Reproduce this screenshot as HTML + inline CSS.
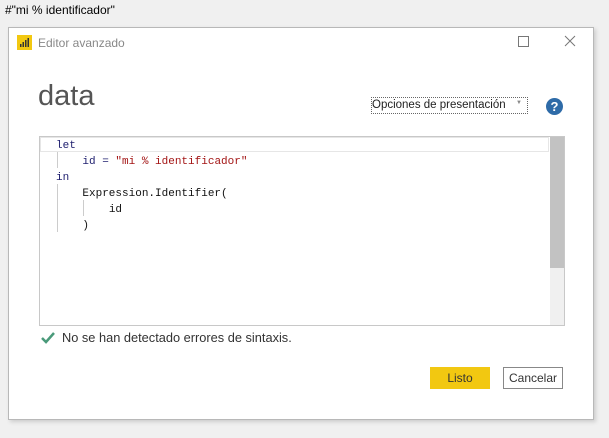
<!DOCTYPE html>
<html><head><meta charset="utf-8"><style>
body{margin:0;width:609px;height:438px;background:#f0f0f0;font-family:"Liberation Sans",sans-serif;position:relative;overflow:hidden}
.a{position:absolute}
.mono{font-family:"Liberation Mono",monospace;font-size:11px;color:#1e1e6e}
</style></head><body>
<div class="a" style="left:5px;top:3px;font-size:12px;color:#000">#"mi % identificador"</div>
<div class="a" style="left:8px;top:27px;width:584px;height:391px;background:#fff;border:1px solid #b8b8b8;box-shadow:2px 2px 4px rgba(0,0,0,.15)"></div>
<div class="a" style="left:17px;top:35px;width:15px;height:15px;background:#f2c811"></div>
<svg class="a" style="left:17px;top:35px" width="15" height="15"><g fill="#333"><rect x="3" y="9" width="1.5" height="3"/><rect x="5.5" y="7" width="1.5" height="5"/><rect x="8" y="5" width="1.5" height="7"/><rect x="10.5" y="3" width="1.5" height="9"/></g></svg>
<div class="a" style="left:38px;top:36px;font-size:12px;color:#888">Editor avanzado</div>
<div class="a" style="left:518px;top:36px;width:9px;height:9px;border:1px solid #777"></div>
<svg class="a" style="left:564px;top:35px" width="12" height="12"><path d="M1 1L11 11M11 1L1 11" stroke="#777" stroke-width="1"/></svg>
<div class="a" style="left:38px;top:80px;font-size:29px;color:#555">data</div>
<div class="a" style="left:371px;top:97px;width:157px;height:17px;border:1px dotted #666;box-sizing:border-box"></div>
<div class="a" style="left:372px;top:99px;font-size:11.5px;color:#222;white-space:nowrap">Opciones de presentación</div>
<div class="a" style="left:516px;top:100px;font-size:6px;color:#888">▼</div>
<div class="a" style="left:546px;top:98px;width:17px;height:17px;border-radius:50%;background:#2e6ba8;color:#fff;font-weight:bold;font-size:13px;text-align:center;line-height:17px">?</div>
<div class="a" style="left:39px;top:136px;width:524px;height:188px;border:1px solid #c8c8c8;background:#fff"></div>
<div class="a" style="left:40px;top:137px;width:509px;height:15px;border:1px solid #e6e6e6;box-sizing:border-box"></div>
<div class="a" style="left:550px;top:137px;width:14px;height:188px;background:#f0f0f0"></div>
<div class="a" style="left:550px;top:137px;width:14px;height:131px;background:#c2c2c2"></div>
<div class="a" style="left:57px;top:152px;width:1px;height:16px;background:#ccc"></div>
<div class="a" style="left:57px;top:184px;width:1px;height:48px;background:#ccc"></div>
<div class="a" style="left:83px;top:200px;width:1px;height:16px;background:#ccc"></div>
<div class="a mono" style="left:56px;top:138px;line-height:16px;white-space:pre">let
    id = <span style="color:#a31515">"mi % identificador"</span>
in
    <span style="color:#111">Expression.Identifier(</span>
        <span style="color:#111">id</span>
    <span style="color:#111">)</span></div>
<svg class="a" style="left:40px;top:331px" width="16" height="14"><path d="M2 7L6 11L14 2" stroke="#4a9a7a" stroke-width="2.5" fill="none"/></svg>
<div class="a" style="left:62px;top:330px;font-size:12.8px;color:#333">No se han detectado errores de sintaxis.</div>
<div class="a" style="left:430px;top:367px;width:60px;height:22px;background:#f2c811;font-size:12px;color:#333;text-align:center;line-height:22px">Listo</div>
<div class="a" style="left:503px;top:367px;width:60px;height:22px;border:1px solid #888;box-sizing:border-box;background:#fff;font-size:12px;color:#333;text-align:center;line-height:20px">Cancelar</div>
</body></html>
